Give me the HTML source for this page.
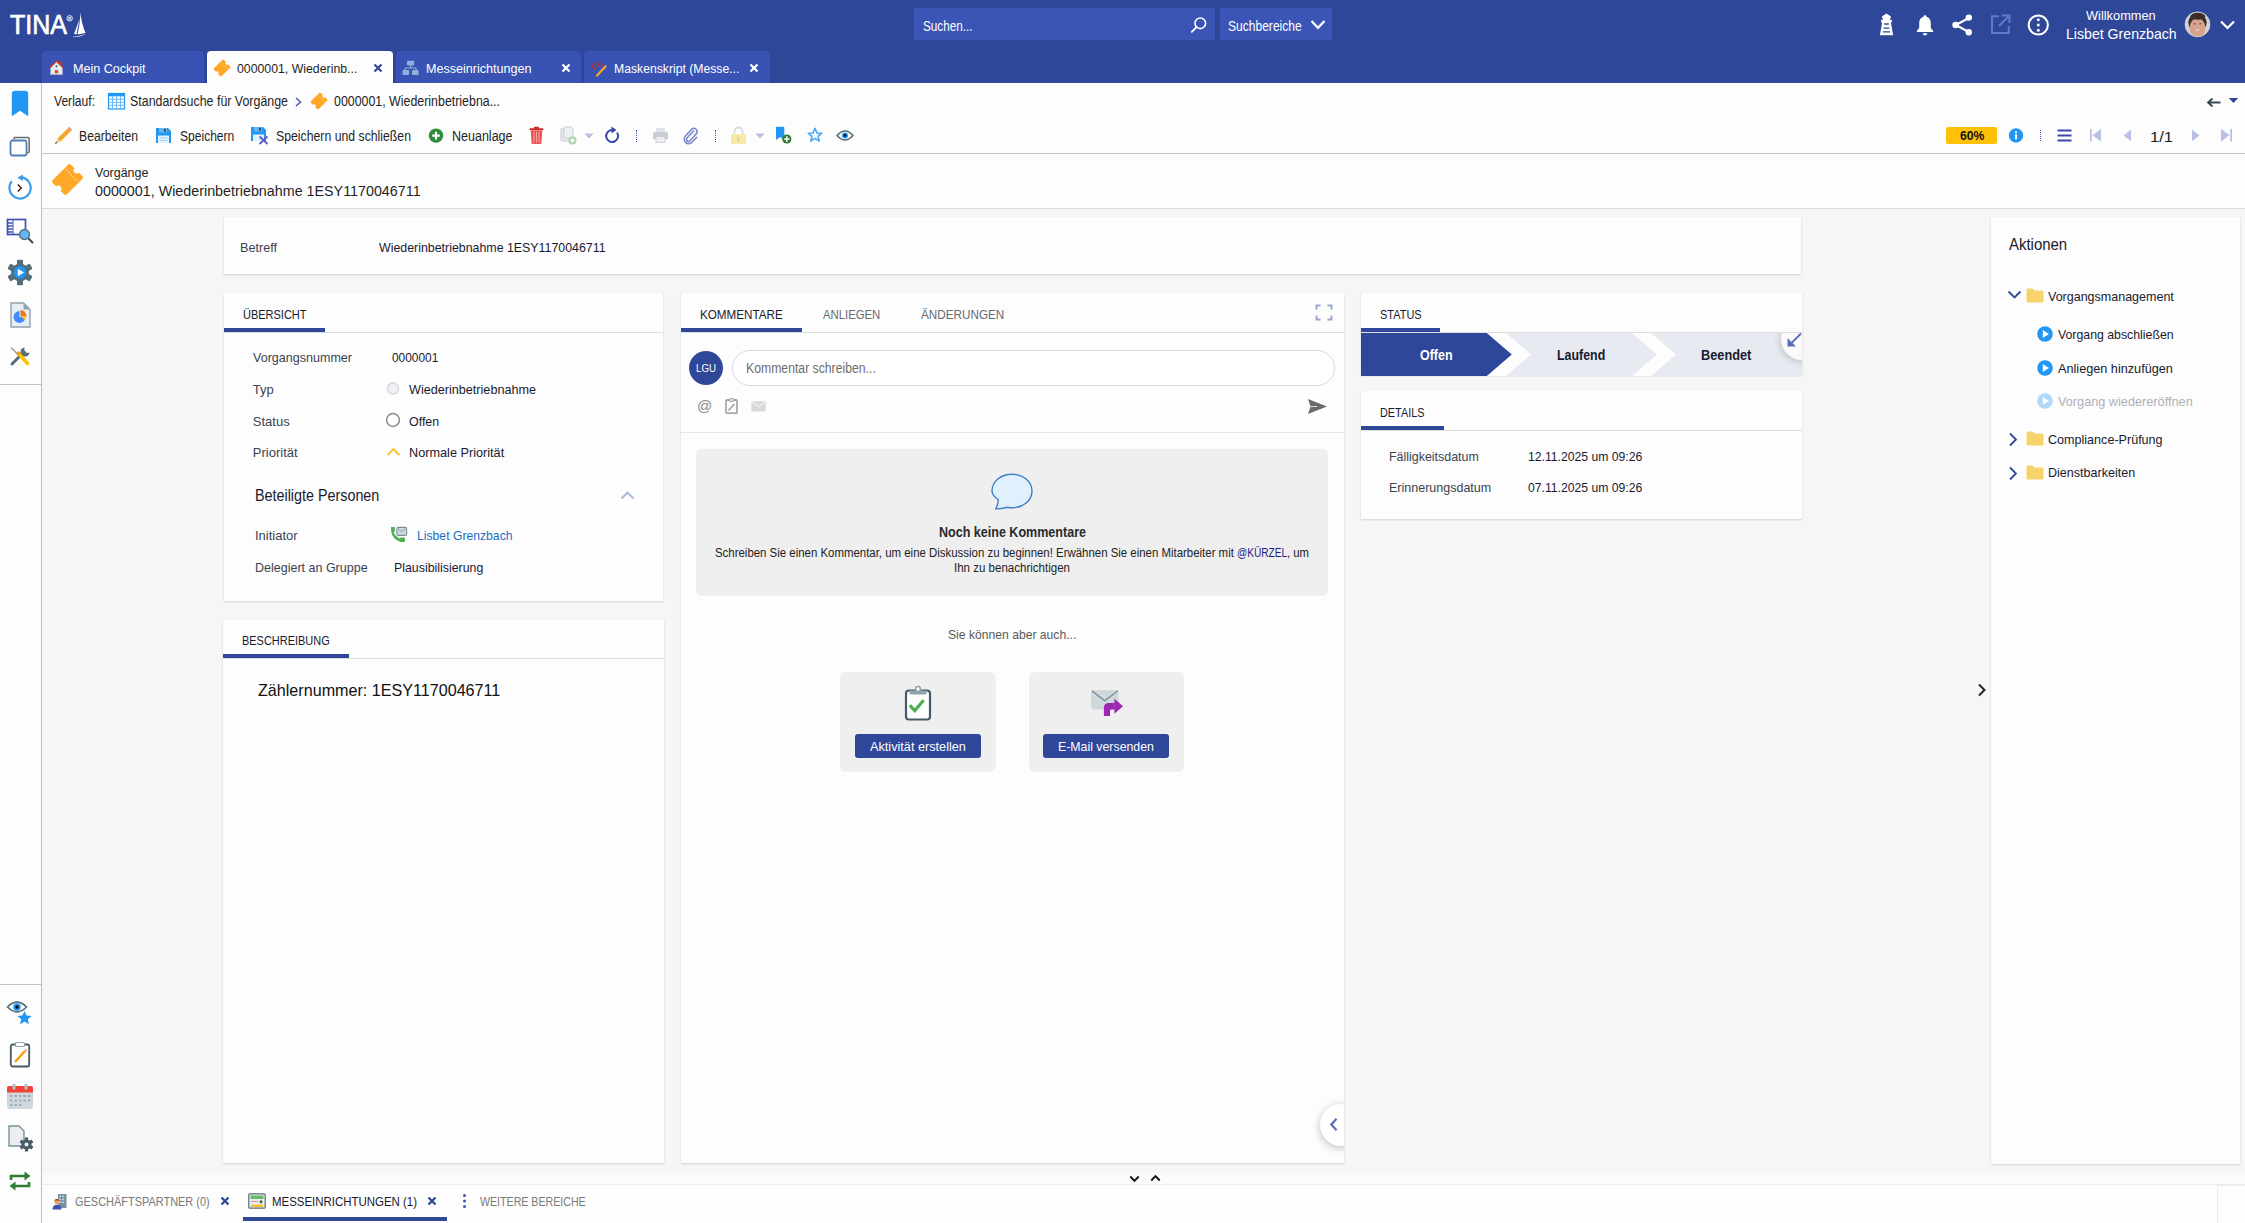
<!DOCTYPE html>
<html><head><meta charset="utf-8">
<style>
*{box-sizing:border-box;margin:0;padding:0}
html,body{width:2245px;height:1223px;overflow:hidden}
body{position:relative;background:#f6f6f6;font-family:"Liberation Sans",sans-serif;color:#1f1f1f;font-size:13px}
.a{position:absolute}
.t{position:absolute;white-space:nowrap;line-height:1;transform-origin:0 0}
svg{position:absolute;overflow:visible}
#hdr{left:0;top:0;width:2245px;height:83px;background:#2e4799}
.tab{position:absolute;top:51px;height:32px;background:#3853b3;border-radius:4px 4px 0 0}
.tab.act{background:#fdfdfd}
.card{position:absolute;background:#fdfdfd;box-shadow:0 1px 2px rgba(0,0,0,0.15)}
.uline{position:absolute;height:4px;background:#2e4799}
.sep{position:absolute;height:1px;background:#dedede}
</style></head><body>
<!-- HEADER -->
<div id="hdr" class="a"></div>

<!-- top tabs -->
<div class="tab" style="left:42px;width:162px"></div>
<div class="tab act" style="left:207px;width:186px"></div>
<div class="tab" style="left:396px;width:185px"></div>
<div class="tab" style="left:584px;width:186px"></div>

<!-- search -->
<div class="a" style="left:914px;top:8px;width:301px;height:32px;background:#3a55b6"></div>
<div class="a" style="left:1220px;top:8px;width:112px;height:32px;background:#3a55b6"></div>

<!-- white areas -->
<div class="a" style="left:0;top:83px;width:41px;height:1140px;background:#fdfdfd"></div>
<div class="a" style="left:41px;top:83px;width:1px;height:1140px;background:#bdbdbd"></div>
<div class="a" style="left:0;top:384px;width:41px;height:1px;background:#c4c4c4"></div>
<div class="a" style="left:0;top:984px;width:41px;height:1px;background:#c4c4c4"></div>
<div class="a" style="left:42px;top:83px;width:2203px;height:70px;background:#fdfdfd"></div>
<div class="a" style="left:42px;top:153px;width:2203px;height:1px;background:#c3c3c3"></div>
<div class="a" style="left:42px;top:154px;width:2203px;height:54px;background:#fdfdfd"></div>
<div class="a" style="left:42px;top:208px;width:2203px;height:1px;background:#dadada"></div>

<!-- bottom bar -->
<div class="a" style="left:42px;top:1173px;width:2203px;height:11px;background:#fbfbfb"></div>
<div class="a" style="left:42px;top:1184px;width:2203px;height:1px;background:#ececec"></div>
<div class="a" style="left:42px;top:1185px;width:2203px;height:38px;background:#fdfdfd"></div>

<!-- cards -->
<div class="card" style="left:224px;top:217px;width:1577px;height:57px"></div>
<div class="card" style="left:224px;top:293px;width:439px;height:308px"></div>
<div class="card" style="left:223px;top:620px;width:441px;height:543px"></div>
<div class="card" style="left:681px;top:293px;width:663px;height:870px"></div>
<div class="card" style="left:1361px;top:293px;width:441px;height:82px"></div>
<div class="card" style="left:1361px;top:391px;width:441px;height:128px"></div>
<div class="card" style="left:1991px;top:217px;width:249px;height:947px"></div>

<!-- ===== HEADER ICONS ===== -->
<!-- sailboat + registered -->
<svg style="left:60px;top:10px" width="30" height="30" viewBox="0 0 30 30">
<circle cx="9.7" cy="8.3" r="2.7" fill="none" stroke="#fff" stroke-width="0.9"/><text x="9.7" y="9.9" font-size="4.2" font-family="Liberation Sans" font-weight="bold" fill="#fff" text-anchor="middle">R</text>
<path d="M20.3 2.5 C21 9 23 17 25.5 23 L17.5 24.5 C19.5 17 20.2 9 20.3 2.5Z" fill="#fff"/>
<path d="M19.5 9 C17.5 15 15.5 20 14 24 L16.5 24.3 C17.5 19 18.7 14 19.5 9Z" fill="#fff"/>
<path d="M13 26.8 C17 26.5 22 25.5 26.7 23.3 C22 26.5 17 27.3 13 27.3Z" fill="#fff"/>
</svg>
<!-- search magnifier -->
<svg style="left:1190px;top:16px" width="18" height="17" viewBox="0 0 18 17">
<circle cx="10.3" cy="7.3" r="5.3" fill="none" stroke="#fff" stroke-width="1.6"/>
<path d="M6.6 11 L1.8 15.8" stroke="#fff" stroke-width="1.8" stroke-linecap="round"/>
</svg>
<!-- Suchbereiche chevron -->
<svg style="left:1310px;top:19px" width="16" height="12" viewBox="0 0 16 12">
<path d="M1.5 2 L8 8.8 L14.5 2" fill="none" stroke="#fff" stroke-width="2.2"/>
</svg>
<!-- lighthouse -->
<svg style="left:1872px;top:8px" width="30" height="32" viewBox="0 0 30 32">
<path d="M14.4 5.6 L19 8.6 L17.8 11.8 H19.8 V14.4 H18.9 L21.1 27.2 H7.9 L10.1 14.4 H9.1 V11.8 H11.1 L9.9 8.6z" fill="#fff"/>
<path d="M12.2 16 H16.8 M11.6 20.1 H17.4 M11 23.9 H18" stroke="#2e4799" stroke-width="1.3"/>
</svg>
<!-- bell -->
<svg style="left:1916px;top:14px" width="18" height="22" viewBox="0 0 18 22">
<path d="M9 1.2 c1 0 1.5 .6 1.5 1.5 c3 .8 4.3 3.3 4.3 6.6 v4.8 l2.4 2.8 v1.2 h-16.4 v-1.2 l2.4 -2.8 v-4.8 c0-3.3 1.3-5.8 4.3-6.6 c0-.9 .5-1.5 1.5-1.5z" fill="#fff"/>
<path d="M6.8 19.2 h4.4 c0 1.3 -1 2.2 -2.2 2.2 s-2.2 -.9 -2.2 -2.2z" fill="#fff"/>
</svg>
<!-- share -->
<svg style="left:1952px;top:14px" width="21" height="22" viewBox="0 0 21 22">
<path d="M16.8 4 L3.8 11 L16.8 18" fill="none" stroke="#fff" stroke-width="2.2"/>
<circle cx="16.8" cy="3.6" r="3.2" fill="#fff"/><circle cx="3.6" cy="11" r="3.3" fill="#fff"/><circle cx="16.8" cy="18.3" r="3.2" fill="#fff"/>
</svg>
<!-- external link dimmed -->
<svg style="left:1990px;top:14px" width="21" height="21" viewBox="0 0 21 21">
<path d="M9 2.2 H2 V19 H18.8 V12" fill="none" stroke="#6478c4" stroke-width="2"/>
<path d="M12 1.5 H19.5 V9 M19.3 1.7 L9 12" fill="none" stroke="#6478c4" stroke-width="2"/>
</svg>
<!-- info dots circle -->
<svg style="left:2027px;top:14px" width="23" height="22" viewBox="0 0 23 22">
<circle cx="11.3" cy="11" r="9.6" fill="none" stroke="#fff" stroke-width="2"/>
<circle cx="11.3" cy="5.8" r="1.5" fill="#fff"/><circle cx="11.3" cy="11" r="1.5" fill="#fff"/><circle cx="11.3" cy="16.2" r="1.5" fill="#fff"/>
</svg>
<!-- avatar -->
<svg style="left:2184px;top:11px" width="27" height="27" viewBox="0 0 27 27">
<defs><clipPath id="avc"><circle cx="13.5" cy="13.4" r="12.6"/></clipPath></defs>
<g clip-path="url(#avc)">
<rect x="0" y="0" width="27" height="27" fill="#d2d3d6"/>
<ellipse cx="13.5" cy="11.5" rx="9.2" ry="8.8" fill="#3b2f2a"/>
<ellipse cx="13.5" cy="17" rx="7.9" ry="10" fill="#d6a48e"/>
<ellipse cx="13.8" cy="5.2" rx="7.4" ry="3.6" fill="#3b2f2a"/>
<ellipse cx="10.7" cy="12.8" rx="1.1" ry="0.7" fill="#6b5a55"/>
<ellipse cx="16.3" cy="12.8" rx="1.1" ry="0.7" fill="#6b5a55"/>
<ellipse cx="13.5" cy="19.2" rx="2.6" ry="1.1" fill="#e3bfb6"/>
</g>
<circle cx="13.5" cy="13.4" r="12.4" fill="none" stroke="#c9cacd" stroke-width="0.8"/>
</svg>
<!-- user chevron -->
<svg style="left:2219px;top:19px" width="17" height="12" viewBox="0 0 17 12">
<path d="M2 2.5 L8.5 9 L15 2.5" fill="none" stroke="#fff" stroke-width="2.2"/>
</svg>

<!-- ===== TAB ICONS ===== -->
<!-- house -->
<svg style="left:49px;top:59px" width="15" height="17" viewBox="0 0 15 17">
<path d="M7.5 2.5 L13.5 8 V15.5 H1.5 V8Z" fill="#e9ecf3"/>
<path d="M0.8 8.6 L7.5 2 L14.2 8.6" fill="none" stroke="#c0392b" stroke-width="1.6"/>
<rect x="11" y="2" width="1.8" height="3.5" fill="#c0392b"/>
<rect x="5.8" y="11" width="3.4" height="4.5" fill="#e4561f"/>
<circle cx="7.5" cy="7.3" r="1" fill="#2d5d8a"/>
<rect x="1.5" y="14.2" width="12" height="1.3" fill="#cfd6e4"/>
</svg>
<!-- ticket (tab) -->
<svg style="left:0;top:0;width:0;height:0"><defs><symbol id="tkt" viewBox="0 0 32 32"><g transform="translate(16,16) rotate(-45)"><path d="M-12.5 -7.8 Q-12.5 -9.8 -10.5 -9.8 H10.5 Q12.5 -9.8 12.5 -7.8 V-2.9 A2.9 2.9 0 0 0 12.5 2.9 V7.8 Q12.5 9.8 10.5 9.8 H-10.5 Q-12.5 9.8 -12.5 7.8 V2.9 A2.9 2.9 0 0 0 -12.5 -2.9Z" fill="#ffa726"/><path d="M5.8 -8 V8.5" stroke="#ffe3b8" stroke-width="1.4" stroke-dasharray="1.5 1.7"/></g></symbol></defs></svg>
<svg style="left:213px;top:59px" width="18" height="18" viewBox="0 0 32 32"><use href="#tkt"/></svg>
<!-- × dark -->
<svg style="left:373px;top:63px" width="10" height="10" viewBox="0 0 10 10"><path d="M1.5 1.5 L8.5 8.5 M8.5 1.5 L1.5 8.5" stroke="#2e4799" stroke-width="2.2"/></svg>
<!-- network icon -->
<svg style="left:402px;top:60px" width="17" height="16" viewBox="0 0 17 16">
<rect x="5" y="0.8" width="7.2" height="4.6" rx="0.8" fill="#8fb0dc"/>
<path d="M8.6 5.4 V8 M3 8 H14 M3 8 V10 M14 8 V10" stroke="#8fb0dc" stroke-width="1.2" fill="none"/>
<rect x="0.5" y="10" width="6.6" height="5" rx="0.8" fill="#8fb0dc"/>
<rect x="10" y="10" width="6.6" height="5" rx="0.8" fill="#8fb0dc"/>
</svg>
<!-- × white -->
<svg style="left:561px;top:63px" width="10" height="10" viewBox="0 0 10 10"><path d="M1.5 1.5 L8.5 8.5 M8.5 1.5 L1.5 8.5" stroke="#fff" stroke-width="2.2"/></svg>
<!-- code pencil -->
<svg style="left:591px;top:61px" width="17" height="16" viewBox="0 0 17 16">
<path d="M4 2.5 L1 5.3 L4 8" fill="none" stroke="#c62828" stroke-width="1.3"/>
<path d="M7.8 1 L6 8" stroke="#c62828" stroke-width="1.3"/>
<path d="M10 2.5 L12.5 5 " fill="none" stroke="#c62828" stroke-width="1.3"/>
<path d="M14.5 5.5 L6 14.5" stroke="#ffa726" stroke-width="2.2" stroke-linecap="round"/>
</svg>
<svg style="left:749px;top:63px" width="10" height="10" viewBox="0 0 10 10"><path d="M1.5 1.5 L8.5 8.5 M8.5 1.5 L1.5 8.5" stroke="#fff" stroke-width="2.2"/></svg>
<!-- ===== BREADCRUMB ===== -->
<svg style="left:107px;top:92px" width="19" height="18" viewBox="0 0 19 18">
<rect x="1.5" y="1.5" width="16" height="15.5" fill="#fff" stroke="#2196f3" stroke-width="1.2"/>
<rect x="1.5" y="1.5" width="16" height="2.8" fill="#2196f3"/>
<path d="M1.5 7.3 H17.5 M1.5 10.3 H17.5 M1.5 13.3 H17.5 M5.5 4 V17 M9.5 4 V17 M13.5 4 V17" stroke="#6cb8f7" stroke-width="1"/>
</svg>
<svg style="left:294px;top:97px" width="9" height="10" viewBox="0 0 9 10"><path d="M2 1 L6.5 5 L2 9" fill="none" stroke="#4a5aa8" stroke-width="1.5"/></svg>
<svg style="left:310px;top:92px" width="18" height="18" viewBox="0 0 32 32"><use href="#tkt"/></svg>
<!-- back arrow + dropdown -->
<svg style="left:2206px;top:96px" width="16" height="12" viewBox="0 0 16 12"><path d="M14.5 6.5 H3 M6.5 2.5 L2 6.5 L6.5 10.5" fill="none" stroke="#37474f" stroke-width="1.8"/></svg>
<svg style="left:2228px;top:97px" width="11" height="7" viewBox="0 0 11 7"><path d="M0.8 1 H10.2 L5.5 6z" fill="#2e4799"/></svg>

<!-- ===== TOOLBAR ===== -->
<!-- pencil -->
<svg style="left:54px;top:126px" width="19" height="19" viewBox="0 0 19 19">
<path d="M3.5 12.5 L13.8 2.2 L16.8 5.2 L6.5 15.5z" fill="#f9a825"/>
<path d="M13.8 2.2 L15.2 0.8 L18.2 3.8 L16.8 5.2z" fill="#ef8f8f"/>
<path d="M3.5 12.5 L6.5 15.5 L1 18z" fill="#f3c78a"/>
<path d="M1 18 L2 15.8 L3.2 17z" fill="#37474f"/>
</svg>
<!-- floppy -->
<svg style="left:155px;top:127px" width="17" height="17" viewBox="0 0 17 17">
<path d="M1 1 H13 L16 4 V16 H1z" fill="#2196f3"/>
<rect x="4" y="1" width="8" height="4.5" fill="#64b5f6"/>
<rect x="9" y="1.8" width="1.8" height="3" fill="#37474f"/>
<rect x="3" y="8.5" width="11" height="7.5" fill="#e3f2fd"/>
<path d="M4.5 11 H12.5 M4.5 13.5 H12.5" stroke="#90caf9" stroke-width="0.8"/>
</svg>
<!-- floppy x -->
<svg style="left:250px;top:126px" width="19" height="19" viewBox="0 0 19 19">
<path d="M1 1 H13 L16 4 V15 H1z" fill="#2196f3"/>
<rect x="4" y="1" width="8" height="4.5" fill="#64b5f6"/>
<rect x="9" y="1.8" width="1.8" height="3" fill="#37474f"/>
<rect x="3" y="8.5" width="11" height="6.5" fill="#e3f2fd"/>
<path d="M9.5 10.5 L17.5 18 M17.5 10.5 L9.5 18" stroke="#5c5fc8" stroke-width="1.8"/>
</svg>
<!-- plus circle -->
<svg style="left:428px;top:128px" width="16" height="16" viewBox="0 0 16 16">
<circle cx="8" cy="7.6" r="7.2" fill="#2e8b3a"/>
<path d="M8 3.8 V11.4 M4.2 7.6 H11.8" stroke="#fff" stroke-width="2.2"/>
</svg>
<!-- trash -->
<svg style="left:529px;top:126px" width="15" height="19" viewBox="0 0 15 19">
<rect x="0.6" y="2.2" width="13.8" height="2" rx="0.8" fill="#c62828"/>
<rect x="5" y="0.8" width="5" height="2" rx="0.8" fill="#c62828"/>
<path d="M1.8 4.5 H13.2 L12.4 17.2 Q12.3 18 11.5 18 H3.5 Q2.7 18 2.6 17.2z" fill="#ef5350"/>
<path d="M5 6 V16.5 M7.5 6 V16.5 M10 6 V16.5" stroke="#f8a5a5" stroke-width="1"/>
</svg>
<!-- copy add dimmed -->
<svg style="left:560px;top:126px" width="17" height="19" viewBox="0 0 17 19">
<path d="M1 3 H8 L10 5 V15 H1z" fill="#e5e8ec" stroke="#c8ced6" stroke-width="1"/>
<path d="M4 1 H11 L13 3 V12 H4z" fill="#eef0f3" stroke="#c8ced6" stroke-width="1"/>
<circle cx="12.5" cy="14.5" r="4" fill="#a5d6a7"/>
<path d="M12.5 12 V17 M10 14.5 H15" stroke="#fff" stroke-width="1.4"/>
</svg>
<svg style="left:584px;top:133px" width="10" height="6" viewBox="0 0 10 6"><path d="M0.5 0.5 H9.5 L5 5.5z" fill="#b9bfe0"/></svg>
<!-- refresh -->
<svg style="left:604px;top:126px" width="16" height="18" viewBox="0 0 16 18">
<path d="M13 6.5 A6 6 0 1 1 8 4" fill="none" stroke="#3949ab" stroke-width="2"/>
<path d="M7.5 0.5 L12.5 4 L7.5 7.5z" fill="#3949ab"/>
</svg>
<!-- separators -->
<div class="a" style="left:636px;top:130px;width:1px;height:12px;border-left:1px dotted #3f51b5"></div>
<div class="a" style="left:715px;top:130px;width:1px;height:12px;border-left:1px dotted #3f51b5"></div>
<!-- printer dim -->
<svg style="left:652px;top:127px" width="17" height="17" viewBox="0 0 17 17">
<rect x="4" y="1" width="9" height="4" fill="#dfe2e6"/>
<rect x="1" y="5" width="15" height="7.5" rx="1.5" fill="#c9ced4"/>
<rect x="4" y="9.5" width="9" height="6" fill="#eceef1" stroke="#c9ced4" stroke-width="0.8"/>
</svg>
<!-- paperclip -->
<svg style="left:683px;top:127px" width="16" height="17" viewBox="0 0 16 17">
<path d="M11 3.5 L4 11 A2 2 0 0 0 7 13.8 L13.5 6.5 A3.3 3.3 0 0 0 8.8 2 L2.5 9 A4.5 4.5 0 0 0 9 15.3 L14 10" fill="none" stroke="#7986cb" stroke-width="1.6"/>
</svg>
<!-- lock dim -->
<svg style="left:730px;top:126px" width="17" height="19" viewBox="0 0 17 19">
<path d="M4.5 8 V5.5 A4 4 0 0 1 12.5 5.5 V8" fill="none" stroke="#d7dadf" stroke-width="1.8"/>
<rect x="1" y="8" width="15" height="10" rx="1" fill="#f7e9a6"/>
<rect x="7.6" y="11" width="1.8" height="4.5" fill="#d9cfa0"/>
</svg>
<svg style="left:755px;top:133px" width="10" height="6" viewBox="0 0 10 6"><path d="M0.5 0.5 H9.5 L5 5.5z" fill="#b9bfe0"/></svg>
<!-- bookmark plus -->
<svg style="left:775px;top:126px" width="17" height="19" viewBox="0 0 17 19">
<path d="M1 1.5 Q1 0.8 1.8 0.8 H8.5 Q9.3 0.8 9.3 1.5 V14 L5.2 11 L1 14z" fill="#2196f3"/>
<circle cx="11.8" cy="13" r="4.6" fill="#2e7d32"/>
<path d="M11.8 10.3 V15.7 M9.1 13 H14.5" stroke="#fff" stroke-width="1.6"/>
</svg>
<!-- star outline -->
<svg style="left:807px;top:127px" width="16" height="16" viewBox="0 0 16 16">
<path d="M8 1.3 L9.9 5.9 L14.8 6.2 L11 9.3 L12.3 14.1 L8 11.4 L3.7 14.1 L5 9.3 L1.2 6.2 L6.1 5.9z" fill="none" stroke="#42a5f5" stroke-width="1.5" stroke-linejoin="round"/>
</svg>
<!-- eye -->
<svg style="left:836px;top:129px" width="18" height="13" viewBox="0 0 18 13">
<path d="M1 6.5 Q9 -2.5 17 6.5 Q9 15.5 1 6.5z" fill="#fff" stroke="#546e7a" stroke-width="1.5"/>
<circle cx="9" cy="6.5" r="3" fill="#2196f3"/><circle cx="9" cy="6.5" r="1.4" fill="#111"/>
</svg>

<!-- right toolbar -->
<div class="a" style="left:1946px;top:127px;width:51px;height:17px;background:#ffc107;border-radius:2px"></div>
<svg style="left:2008px;top:128px" width="16" height="16" viewBox="0 0 16 16">
<circle cx="8" cy="7.5" r="7.2" fill="#2196f3"/>
<rect x="7" y="6.3" width="2" height="5" fill="#fff"/><circle cx="8" cy="4.3" r="1.1" fill="#fff"/>
</svg>
<div class="a" style="left:2040px;top:130px;width:1px;height:11px;border-left:1px dotted #3f51b5"></div>
<svg style="left:2057px;top:129px" width="15" height="13" viewBox="0 0 15 13"><path d="M0.5 1.5 H14.5 M0.5 6.5 H14.5 M0.5 11.5 H14.5" stroke="#3949ab" stroke-width="1.8"/></svg>
<svg style="left:2089px;top:128px" width="13" height="14" viewBox="0 0 13 14"><rect x="1" y="1" width="1.8" height="12.5" fill="#b8c0e6"/><path d="M12 1 V13.5 L3.5 7.2z" fill="#b8c0e6"/></svg>
<svg style="left:2122px;top:129px" width="10" height="13" viewBox="0 0 10 13"><path d="M9 0.8 V12.2 L1.5 6.5z" fill="#b8c0e6"/></svg>
<svg style="left:2191px;top:129px" width="10" height="13" viewBox="0 0 10 13"><path d="M1 0.8 V12.2 L8.5 6.5z" fill="#b8c0e6"/></svg>
<svg style="left:2220px;top:128px" width="13" height="14" viewBox="0 0 13 14"><rect x="10.2" y="1" width="1.8" height="12.5" fill="#b8c0e6"/><path d="M1 1 V13.5 L9.5 7.2z" fill="#b8c0e6"/></svg>

<!-- title ticket -->
<svg style="left:51px;top:163px" width="33" height="33" viewBox="0 0 32 32"><use href="#tkt"/></svg>
<!-- ===== SIDEBAR ===== -->
<svg style="left:11px;top:90px" width="18" height="27" viewBox="0 0 18 27">
<path d="M0.8 4 Q0.8 0.8 4 0.8 H14 Q17.2 0.8 17.2 4 V26.3 L9 20.8 L0.8 26.3z" fill="#2196f3"/>
</svg>
<svg style="left:9px;top:136px" width="22" height="21" viewBox="0 0 22 21">
<path d="M5 3.5 V2.5 Q5 1.5 6 1.5 H19 Q20.2 1.5 20.2 2.7 V15.5 Q20.2 16.5 19.2 16.5 H18" fill="none" stroke="#6b6b6b" stroke-width="1.5"/>
<rect x="1.5" y="4.5" width="16" height="15" rx="2" fill="#fff" stroke="#4f7fb5" stroke-width="1.8"/>
</svg>
<svg style="left:7px;top:175px" width="26" height="26" viewBox="0 0 26 26">
<path d="M14.5 2.4 A10.6 10.6 0 1 1 4.8 6.3" fill="none" stroke="#3d9be9" stroke-width="2.2"/>
<path d="M15.8 -0.4 L10.2 2.8 L15.8 6z" fill="#3d9be9"/>
<path d="M10.8 9.5 L14.3 13 L10.8 16.5" fill="none" stroke="#3b1a1a" stroke-width="1.4"/>
</svg>
<svg style="left:6px;top:218px" width="28" height="26" viewBox="0 0 28 26">
<rect x="1.5" y="1.5" width="18" height="15" fill="#fff" stroke="#3f51b5" stroke-width="1.7"/>
<path d="M2 5 H6.5 M2 8 H6.5 M2 11 H6.5 M2 14 H6.5" stroke="#3f51b5" stroke-width="1.6"/>
<path d="M7 1.5 V16.5" stroke="#3f51b5" stroke-width="1"/>
<path d="M22 20 L26.5 24.5" stroke="#37474f" stroke-width="2" stroke-linecap="round"/>
<circle cx="18.5" cy="16.5" r="5" fill="#64b5f6" stroke="#546e7a" stroke-width="1.3"/>
</svg>
<svg style="left:7px;top:259px" width="26" height="27" viewBox="0 0 26 27">
<g fill="#546e7a" transform="translate(13,13.5)">
<circle r="9"/>
<rect x="-3" y="-12.8" width="6" height="6" rx="1"/>
<rect x="-3" y="-12.8" width="6" height="6" rx="1" transform="rotate(60)"/>
<rect x="-3" y="-12.8" width="6" height="6" rx="1" transform="rotate(120)"/>
<rect x="-3" y="-12.8" width="6" height="6" rx="1" transform="rotate(180)"/>
<rect x="-3" y="-12.8" width="6" height="6" rx="1" transform="rotate(240)"/>
<rect x="-3" y="-12.8" width="6" height="6" rx="1" transform="rotate(300)"/>
</g>
<circle cx="13" cy="13.5" r="6.2" fill="#2196f3"/>
<path d="M10.8 9.8 L17 13.5 L10.8 17.2z" fill="#fff"/>
</svg>
<svg style="left:10px;top:302px" width="21" height="26" viewBox="0 0 21 26">
<path d="M1 1 H13.5 L20 7.5 V25 H1z" fill="#e8eef7" stroke="#90a4ae" stroke-width="1.4"/>
<path d="M13.5 1 V7.5 H20z" fill="#90a4ae"/>
<path d="M9.5 15 V9 A6 6 0 1 0 15.5 15z" fill="#448aff"/>
<path d="M10.5 14 V8 A6 6 0 0 1 16.5 14z" fill="#e67e22"/>
<path d="M10.5 14 H16.5 A6 6 0 0 1 14.8 18.2z" fill="#f4c430"/>
</svg>
<svg style="left:9px;top:346px" width="22" height="21" viewBox="0 0 22 21">
<path d="M2.5 2 L10 9.5" stroke="#90a4ae" stroke-width="1.6" stroke-linecap="round"/>
<path d="M3 18 L13.5 7.5" stroke="#546e7a" stroke-width="3" stroke-linecap="round"/>
<path d="M15.5 1.5 A4.5 4.5 0 1 0 20.5 6.5 L18 7 L15.3 4.2z" fill="#546e7a"/>
<path d="M9.5 7.5 L18.5 17.5" stroke="#ffc107" stroke-width="3.6" stroke-linecap="round"/>
<path d="M8.6 6.6 L10.6 8.6" stroke="#ff9800" stroke-width="3.6"/>
</svg>

<!-- bottom sidebar icons -->
<svg style="left:6px;top:999px" width="28" height="28" viewBox="0 0 28 28">
<path d="M1.5 8 Q11 -1.5 20.5 8 Q11 17.5 1.5 8z" fill="#fff" stroke="#546e7a" stroke-width="1.7"/>
<circle cx="11" cy="8" r="3.8" fill="#2196f3"/><circle cx="11" cy="8" r="1.7" fill="#000"/>
<path d="M18.5 12 L20.6 16.6 L25.6 17 L21.8 20.3 L23 25.2 L18.5 22.5 L14 25.2 L15.2 20.3 L11.4 17 L16.4 16.6z" fill="#2196f3"/>
</svg>
<svg style="left:9px;top:1041px" width="22" height="27" viewBox="0 0 22 27">
<rect x="1.8" y="3.5" width="18.4" height="22" rx="2" fill="#fff" stroke="#455a64" stroke-width="1.8"/>
<rect x="6.5" y="1.5" width="9" height="4" rx="1" fill="#fff" stroke="#90a4ae" stroke-width="1.2"/>
<path d="M6 21 L16 10" stroke="#ff9800" stroke-width="2.2"/>
<path d="M16 10 L17.5 8.5" stroke="#ef9a9a" stroke-width="2.2"/>
</svg>
<svg style="left:6px;top:1083px" width="28" height="27" viewBox="0 0 28 27">
<rect x="1" y="3" width="26" height="23" rx="2" fill="#cfd8dc"/>
<path d="M1 5 Q1 3 3 3 H25 Q27 3 27 5 V9.5 H1z" fill="#f44336"/>
<rect x="6.5" y="0.8" width="3" height="6" rx="1.2" fill="#b0bec5"/><rect x="18.5" y="0.8" width="3" height="6" rx="1.2" fill="#b0bec5"/>
<g fill="#9eadb5"><rect x="4" y="12" width="2.5" height="2"/><rect x="8.5" y="12" width="2.5" height="2"/><rect x="13" y="12" width="2.5" height="2"/><rect x="17.5" y="12" width="2.5" height="2"/><rect x="22" y="12" width="2.5" height="2"/>
<rect x="4" y="16.5" width="2.5" height="2"/><rect x="8.5" y="16.5" width="2.5" height="2"/><rect x="13" y="16.5" width="2.5" height="2"/><rect x="17.5" y="16.5" width="2.5" height="2"/><rect x="22" y="16.5" width="2.5" height="2"/>
<rect x="4" y="21" width="2.5" height="2"/><rect x="8.5" y="21" width="2.5" height="2"/><rect x="13" y="21" width="2.5" height="2"/></g>
</svg>
<svg style="left:7px;top:1125px" width="27" height="27" viewBox="0 0 27 27">
<path d="M2 1 H12 L17 6 V21 H2z" fill="#eceff1" stroke="#78909c" stroke-width="1.4"/>
<g transform="translate(19.5,19.5)" fill="#455a64"><circle r="5"/>
<rect x="-1.6" y="-7" width="3.2" height="3.5"/><rect x="-1.6" y="-7" width="3.2" height="3.5" transform="rotate(60)"/><rect x="-1.6" y="-7" width="3.2" height="3.5" transform="rotate(120)"/><rect x="-1.6" y="-7" width="3.2" height="3.5" transform="rotate(180)"/><rect x="-1.6" y="-7" width="3.2" height="3.5" transform="rotate(240)"/><rect x="-1.6" y="-7" width="3.2" height="3.5" transform="rotate(300)"/>
<circle r="2" fill="#eceff1"/></g>
</svg>
<svg style="left:8px;top:1169px" width="24" height="24" viewBox="0 0 24 24">
<path d="M3 11 V7 H18" fill="none" stroke="#2e7d32" stroke-width="2.6"/>
<path d="M16.5 2.5 L22.5 7 L16.5 11.5z" fill="#2e7d32"/>
<path d="M21 13 V17 H6" fill="none" stroke="#2e7d32" stroke-width="2.6"/>
<path d="M7.5 12.5 L1.5 17 L7.5 21.5z" fill="#2e7d32"/>
</svg>
<!-- ===== CARDS CONTENT ===== -->
<!-- Übersicht tab underline & sep -->
<div class="uline" style="left:224px;top:328px;width:101px;height:4px"></div>
<div class="sep" style="left:224px;top:332px;width:439px"></div>
<!-- radios -->
<svg style="left:386px;top:382px" width="14" height="14" viewBox="0 0 14 14"><circle cx="7" cy="6.5" r="5.6" fill="#eef0f8" stroke="#cfcfcf" stroke-width="1.1"/></svg>
<svg style="left:385px;top:412px" width="16" height="16" viewBox="0 0 16 16"><circle cx="8" cy="8" r="6.4" fill="#fff" stroke="#8a8a8a" stroke-width="1.5"/></svg>
<svg style="left:386px;top:447px" width="15" height="10" viewBox="0 0 15 10"><path d="M1.5 8 L7.4 2 L13.3 8" fill="none" stroke="#fbc02d" stroke-width="1.8"/></svg>
<!-- chevron up light -->
<svg style="left:620px;top:490px" width="15" height="11" viewBox="0 0 15 11"><path d="M1.5 8.5 L7.5 2.5 L13.5 8.5" fill="none" stroke="#a9b4d9" stroke-width="1.8"/></svg>
<!-- phone mail icon -->
<svg style="left:390px;top:526px" width="18" height="17" viewBox="0 0 18 17">
<rect x="6.9" y="1.4" width="9.7" height="8" rx="1.2" fill="#cfd8dc" stroke="#78909c" stroke-width="1.1"/>
<path d="M8 2.8 L11.75 5.6 L15.5 2.8" fill="none" stroke="#8a9ba5" stroke-width="0.9"/>
<path d="M1.1 1 H4.8 V5.3 L3.6 7 Q5.5 10.3 9.6 12.4 L11 11.4 H14.9 V16 H10.8 Q2.2 13.2 1.1 5z" fill="#4caf50"/>
</svg>
<!-- Beschreibung underline & sep -->
<div class="uline" style="left:223px;top:654px;width:126px;height:4px"></div>
<div class="sep" style="left:223px;top:658px;width:441px"></div>

<!-- Kommentare tabs -->
<div class="uline" style="left:681px;top:328px;width:121px;height:4px"></div>
<div class="sep" style="left:681px;top:332px;width:663px"></div>
<!-- expand icon -->
<svg style="left:1315px;top:304px" width="18" height="17" viewBox="0 0 18 17">
<path d="M1.5 5.5 V1.5 H5.5 M12.5 1.5 H16.5 V5.5 M16.5 11.5 V15.5 H12.5 M5.5 15.5 H1.5 V11.5" fill="none" stroke="#9aa6d3" stroke-width="2"/>
</svg>
<!-- LGU avatar -->
<div class="a" style="left:689px;top:351px;width:34px;height:34px;border-radius:50%;background:#2e4799"></div>
<!-- input -->
<div class="a" style="left:732px;top:350px;width:603px;height:36px;border-radius:18px;background:#fff;border:1px solid #d6d9e1"></div>
<!-- @ -->
<div class="t" style="left:697px;top:398px;font-size:15px;color:#8a8a8a">@</div>
<!-- clipboard pencil gray -->
<svg style="left:725px;top:398px" width="13" height="16" viewBox="0 0 13 16">
<rect x="1" y="2" width="11" height="13.2" rx="0.8" fill="none" stroke="#8a8a8a" stroke-width="1.3"/>
<rect x="4" y="0.8" width="5" height="2.4" rx="0.8" fill="#fff" stroke="#8a8a8a" stroke-width="1"/>
<path d="M3.5 12.5 L9.5 6" stroke="#9a9a9a" stroke-width="1.4"/>
</svg>
<!-- mail gray -->
<svg style="left:751px;top:401px" width="15" height="11" viewBox="0 0 15 11">
<rect x="0.3" y="0.3" width="14.4" height="10.2" rx="1" fill="#d9d9d9"/>
<path d="M0.8 1 L7.5 5.8 L14.2 1" fill="none" stroke="#fafafa" stroke-width="1"/>
</svg>
<!-- send -->
<svg style="left:1307px;top:398px" width="21" height="17" viewBox="0 0 21 17">
<path d="M1 1 L20 8.5 L1 16 L3.5 8.5z" fill="#6b6b6b"/>
<path d="M3.5 8.5 H10" stroke="#fdfdfd" stroke-width="0.8"/>
</svg>
<div class="sep" style="left:681px;top:432px;width:663px;background:#e6e6e6"></div>
<!-- gray box -->
<div class="a" style="left:696px;top:449px;width:632px;height:147px;border-radius:6px;background:#efefef"></div>
<!-- bubble -->
<svg style="left:990px;top:472px" width="44" height="39" viewBox="0 0 44 39">
<path d="M8.3 27.5 C3.5 24.3 2 20.5 2 19 C2 9.5 10.8 2.2 22 2.2 C33.2 2.2 42 9.5 42 19 C42 28.5 33.2 35.8 22 35.8 C20.5 35.8 19 35.6 17.5 35.2 C14.5 36 10 37 5.8 36.8 C7.3 34.5 8.3 31 8.3 27.5z" fill="#e0f0fd" stroke="#3d7fc9" stroke-width="1.4"/>
</svg>
<!-- action cards -->
<div class="a" style="left:840px;top:672px;width:156px;height:100px;border-radius:6px;background:#efefef"></div>
<div class="a" style="left:1029px;top:672px;width:155px;height:100px;border-radius:6px;background:#efefef"></div>
<svg style="left:904px;top:685px" width="28" height="36" viewBox="0 0 28 36">
<rect x="2" y="5.5" width="24" height="29" rx="3" fill="#fff" stroke="#455a64" stroke-width="2.2"/>
<path d="M5.5 5.5 H22.5 V8 Q22.5 9.5 21 9.5 H7 Q5.5 9.5 5.5 8z" fill="#90a4ae"/>
<circle cx="14" cy="4" r="2.4" fill="#fff" stroke="#90a4ae" stroke-width="1.5"/>
<path d="M5.8 20.3 L10.8 25.6 L19.6 15.3" fill="none" stroke="#4caf50" stroke-width="3.2"/>
</svg>
<svg style="left:1090px;top:689px" width="35" height="30" viewBox="0 0 35 30">
<rect x="1" y="0.9" width="27.6" height="19.5" rx="3" fill="#cfd8dc"/>
<path d="M1.8 1.8 L14.8 11.8 L27.8 1.8" fill="none" stroke="#78909c" stroke-width="1.4"/>
<path d="M13.9 26.9 V18.5 A4.5 4.5 0 0 1 18.4 14 H24.6 V20.4 H21.3 Q20 20.4 20 21.7 V26.9z" fill="#9c27b0"/>
<path d="M24.4 9.8 L33 17.2 L24.4 24.8z" fill="#9c27b0"/>
</svg>
<div class="a" style="left:855px;top:734px;width:126px;height:24px;border-radius:3px;background:#2e4799"></div>
<div class="a" style="left:1043px;top:734px;width:126px;height:24px;border-radius:3px;background:#2e4799"></div>
<!-- collapse circle bottom -->
<div class="a" style="left:1320px;top:1104px;width:42px;height:42px;border-radius:50%;background:#fff;box-shadow:0 2px 8px rgba(0,0,0,0.25);clip-path:inset(-20px 18px -20px -20px)"></div>
<svg style="left:1328px;top:1117px" width="12" height="15" viewBox="0 0 12 15"><path d="M8.5 1.8 L3.3 7.5 L8.5 13.2" fill="none" stroke="#5b6eb5" stroke-width="2.2"/></svg>

<!-- STATUS -->
<div class="uline" style="left:1361px;top:328px;width:79px;height:4px"></div>
<div class="sep" style="left:1361px;top:332px;width:441px"></div>
<svg style="left:1361px;top:333px" width="441" height="43" viewBox="0 0 441 43">
<rect x="0" y="0" width="441" height="43" fill="#e8eaf2"/>
<path d="M0 0 H126 L151 21.5 L126 43 H0z" fill="#2e4799"/>
<path d="M126 0 H145 L170 21.5 L145 43 H126 L151 21.5z" fill="#fdfdfd"/>
<path d="M271 0 H290 L315 21.5 L290 43 H271 L296 21.5z" fill="#fdfdfd"/>
</svg>
<!-- collapse diag button -->
<div class="a" style="left:1781px;top:318px;width:42px;height:42px;border-radius:50%;background:#fafafb;box-shadow:-2px 2px 6px rgba(0,0,0,0.15);clip-path:inset(15px 21px -20px -20px)"></div>
<svg style="left:1786px;top:333px" width="16" height="15" viewBox="0 0 16 15"><path d="M15 0.5 L4 11.5" stroke="#5b6eb5" stroke-width="1.8"/><path d="M1.5 5 V13.5 H10z" fill="#5b6eb5"/></svg>
<!-- DETAILS -->
<div class="uline" style="left:1361px;top:426px;width:83px;height:4px"></div>
<div class="sep" style="left:1361px;top:430px;width:441px"></div>

<!-- AKTIONEN -->
<svg style="left:2007px;top:290px" width="15" height="10" viewBox="0 0 15 10"><path d="M1.5 1.5 L7.5 7.5 L13.5 1.5" fill="none" stroke="#2e4799" stroke-width="1.8"/></svg>
<svg style="left:0;top:0;width:0;height:0"><defs><symbol id="fld" viewBox="0 0 18 15"><path d="M0.5 2 Q0.5 0.5 2 0.5 H6.5 L8.5 2.5 H16 Q17.5 2.5 17.5 4 V13 Q17.5 14.5 16 14.5 H2 Q0.5 14.5 0.5 13z" fill="#f6d36b"/></symbol>
<symbol id="ply" viewBox="0 0 16 16"><circle cx="8" cy="8" r="7.8" fill="#2196f3"/><path d="M5.8 4 L12 8 L5.8 12z" fill="#fff"/></symbol></defs></svg>
<svg style="left:2026px;top:288px" width="18" height="15" viewBox="0 0 18 15"><use href="#fld"/></svg>
<svg style="left:2037px;top:326px" width="16" height="16" viewBox="0 0 16 16"><use href="#ply"/></svg>
<svg style="left:2037px;top:360px" width="16" height="16" viewBox="0 0 16 16"><use href="#ply"/></svg>
<svg style="left:2037px;top:393px;opacity:0.35" width="16" height="16" viewBox="0 0 16 16"><use href="#ply"/></svg>
<svg style="left:2008px;top:432px" width="11" height="15" viewBox="0 0 11 15"><path d="M2 1.5 L8 7.5 L2 13.5" fill="none" stroke="#2e4799" stroke-width="1.8"/></svg>
<svg style="left:2026px;top:431px" width="18" height="15" viewBox="0 0 18 15"><use href="#fld"/></svg>
<svg style="left:2008px;top:466px" width="11" height="15" viewBox="0 0 11 15"><path d="M2 1.5 L8 7.5 L2 13.5" fill="none" stroke="#2e4799" stroke-width="1.8"/></svg>
<svg style="left:2026px;top:465px" width="18" height="15" viewBox="0 0 18 15"><use href="#fld"/></svg>
<!-- right > chevron -->
<svg style="left:1977px;top:683px" width="10" height="14" viewBox="0 0 10 14"><path d="M2 1.5 L7.5 7 L2 12.5" fill="none" stroke="#222" stroke-width="2"/></svg>

<!-- BOTTOM BAR -->
<svg style="left:1129px;top:1175px" width="12" height="8" viewBox="0 0 12 8"><path d="M1.3 1.5 L5.5 5.8 L9.7 1.5" fill="none" stroke="#111" stroke-width="1.9"/></svg>
<svg style="left:1150px;top:1174px" width="12" height="8" viewBox="0 0 12 8"><path d="M1.3 6.5 L5.5 2.2 L9.7 6.5" fill="none" stroke="#111" stroke-width="1.9"/></svg>
<!-- geschäftspartner icon -->
<svg style="left:52px;top:1193px" width="15" height="17" viewBox="0 0 15 17">
<rect x="6" y="1" width="8.5" height="14" fill="#78909c"/>
<g fill="#cfe3f7"><rect x="7.3" y="2.5" width="1.6" height="1.6"/><rect x="10.3" y="2.5" width="1.6" height="1.6"/><rect x="7.3" y="5.5" width="1.6" height="1.6"/><rect x="10.3" y="5.5" width="1.6" height="1.6"/><rect x="7.3" y="8.5" width="1.6" height="1.6"/><rect x="10.3" y="8.5" width="1.6" height="1.6"/></g>
<circle cx="5" cy="8.5" r="2.8" fill="#f4a460"/>
<path d="M2.2 7.5 Q5 4.5 7.8 7.5z" fill="#5d4037"/>
<path d="M0.5 16.5 Q0.5 11.8 5 11.8 Q9.5 11.8 9.5 16.5z" fill="#3f51b5"/>
</svg>
<svg style="left:220px;top:1196px" width="10" height="10" viewBox="0 0 10 10"><path d="M1.5 1.5 L8.5 8.5 M8.5 1.5 L1.5 8.5" stroke="#2e4799" stroke-width="2.2"/></svg>
<!-- messeinrichtungen icon -->
<svg style="left:248px;top:1193px" width="18" height="16" viewBox="0 0 18 16">
<rect x="0.8" y="0.8" width="16.4" height="14.4" rx="1" fill="#eceff1" stroke="#546e7a" stroke-width="1.2"/>
<rect x="2.5" y="2.5" width="13" height="3.5" fill="#66bb6a"/>
<path d="M3 8.5 H10" stroke="#e57373" stroke-width="0.8"/>
<circle cx="13" cy="8.8" r="1.5" fill="#455a64"/>
<rect x="3" y="11.5" width="12" height="2.5" fill="#fbc02d"/>
</svg>
<svg style="left:427px;top:1196px" width="10" height="10" viewBox="0 0 10 10"><path d="M1.5 1.5 L8.5 8.5 M8.5 1.5 L1.5 8.5" stroke="#2e4799" stroke-width="2.2"/></svg>
<div class="uline" style="left:243px;top:1217px;width:204px;height:4px"></div>
<svg style="left:462px;top:1193px" width="5" height="16" viewBox="0 0 5 16"><circle cx="2.5" cy="2.5" r="1.5" fill="#3f51b5"/><circle cx="2.5" cy="8" r="1.5" fill="#3f51b5"/><circle cx="2.5" cy="13.5" r="1.5" fill="#3f51b5"/></svg>
<div class="a" style="left:2217px;top:1185px;width:28px;height:38px;border-left:1px solid #ececec;border-top:1px solid #ececec"></div>

<div class="t" style="left:10.0px;top:12px;font-size:27px;color:#ffffff;transform:scaleX(0.9268);-webkit-text-stroke:0.7px #fff;">TINA</div>
<div class="t" style="left:922.6px;top:18.5px;font-size:14px;color:#ffffff;transform:scaleX(0.8385);">Suchen...</div>
<div class="t" style="left:1227.7px;top:18.5px;font-size:14px;color:#ffffff;transform:scaleX(0.8608);">Suchbereiche</div>
<div class="t" style="left:2086.3px;top:9px;font-size:13px;color:#ffffff;transform:scaleX(0.9847);">Willkommen</div>
<div class="t" style="left:2065.8px;top:25.9px;font-size:15px;color:#ffffff;transform:scaleX(0.9416);">Lisbet Grenzbach</div>
<div class="t" style="left:72.6px;top:62px;font-size:13px;color:#ffffff;transform:scaleX(0.9662);">Mein Cockpit</div>
<div class="t" style="left:237.2px;top:62px;font-size:13px;color:#1f1f1f;transform:scaleX(0.9458);">0000001, Wiederinb...</div>
<div class="t" style="left:425.6px;top:62px;font-size:13px;color:#ffffff;transform:scaleX(0.9678);">Messeinrichtungen</div>
<div class="t" style="left:614.1px;top:62px;font-size:13px;color:#ffffff;transform:scaleX(0.9383);">Maskenskript (Messe...</div>
<div class="t" style="left:54.3px;top:94.4px;font-size:14px;color:#1f1f1f;transform:scaleX(0.8636);">Verlauf:</div>
<div class="t" style="left:130.0px;top:94.4px;font-size:14px;color:#1f1f1f;transform:scaleX(0.8864);">Standardsuche für Vorgänge</div>
<div class="t" style="left:333.6px;top:94.4px;font-size:14px;color:#1f1f1f;transform:scaleX(0.8850);">0000001, Wiederinbetriebna...</div>
<div class="t" style="left:79.2px;top:129px;font-size:14px;color:#1f1f1f;transform:scaleX(0.8713);">Bearbeiten</div>
<div class="t" style="left:179.9px;top:129px;font-size:14px;color:#1f1f1f;transform:scaleX(0.8613);">Speichern</div>
<div class="t" style="left:275.5px;top:129px;font-size:14px;color:#1f1f1f;transform:scaleX(0.8761);">Speichern und schließen</div>
<div class="t" style="left:451.6px;top:129px;font-size:14px;color:#1f1f1f;transform:scaleX(0.8933);">Neuanlage</div>
<div class="t" style="left:2149.9px;top:129.9px;font-size:14px;color:#1f1f1f;transform:scaleX(1.1869);">1/1</div>
<div class="t" style="left:1959.7px;top:129.3px;font-size:13px;color:#111;font-weight:bold;transform:scaleX(0.9416);">60%</div>
<div class="t" style="left:94.9px;top:165.7px;font-size:13px;color:#1f1f1f;transform:scaleX(0.9593);">Vorgänge</div>
<div class="t" style="left:95.0px;top:183px;font-size:15px;color:#1f1f1f;transform:scaleX(0.9538);">0000001, Wiederinbetriebnahme 1ESY1170046711</div>
<div class="t" style="left:240.2px;top:240.5px;font-size:13px;color:#3c4250;transform:scaleX(0.9721);">Betreff</div>
<div class="t" style="left:378.6px;top:240.5px;font-size:13px;color:#1a1a2e;transform:scaleX(0.9520);">Wiederinbetriebnahme 1ESY1170046711</div>
<div class="t" style="left:243.0px;top:308.2px;font-size:13px;color:#1a1a2e;transform:scaleX(0.8453);">ÜBERSICHT</div>
<div class="t" style="left:252.8px;top:351.1px;font-size:13px;color:#3c4250;transform:scaleX(0.9648);">Vorgangsnummer</div>
<div class="t" style="left:391.8px;top:351.1px;font-size:13px;color:#1a1a2e;transform:scaleX(0.9148);">0000001</div>
<div class="t" style="left:252.8px;top:383.2px;font-size:13px;color:#3c4250;">Typ</div>
<div class="t" style="left:408.9px;top:383.2px;font-size:13px;color:#1a1a2e;transform:scaleX(0.9710);">Wiederinbetriebnahme</div>
<div class="t" style="left:252.8px;top:414.5px;font-size:13px;color:#3c4250;">Status</div>
<div class="t" style="left:408.9px;top:414.5px;font-size:13px;color:#1a1a2e;transform:scaleX(0.9569);">Offen</div>
<div class="t" style="left:252.8px;top:445.9px;font-size:13px;color:#3c4250;">Priorität</div>
<div class="t" style="left:408.9px;top:445.9px;font-size:13px;color:#1a1a2e;transform:scaleX(0.9761);">Normale Priorität</div>
<div class="t" style="left:255.0px;top:488px;font-size:16px;color:#1a1a2e;transform:scaleX(0.8958);">Beteiligte Personen</div>
<div class="t" style="left:255.0px;top:529px;font-size:13px;color:#3c4250;">Initiator</div>
<div class="t" style="left:417.0px;top:529px;font-size:13px;color:#1b6ec2;transform:scaleX(0.9373);">Lisbet Grenzbach</div>
<div class="t" style="left:255.0px;top:561px;font-size:13px;color:#3c4250;transform:scaleX(0.9618);">Delegiert an Gruppe</div>
<div class="t" style="left:394.0px;top:561px;font-size:13px;color:#1a1a2e;transform:scaleX(0.9506);">Plausibilisierung</div>
<div class="t" style="left:242.3px;top:634px;font-size:13px;color:#1a1a2e;transform:scaleX(0.8431);">BESCHREIBUNG</div>
<div class="t" style="left:258.0px;top:681.7px;font-size:17px;color:#111;transform:scaleX(0.9484);">Zählernummer: 1ESY1170046711</div>
<div class="t" style="left:700.3px;top:307.8px;font-size:13px;color:#1a1a2e;transform:scaleX(0.8969);">KOMMENTARE</div>
<div class="t" style="left:823.2px;top:307.8px;font-size:13px;color:#666a75;transform:scaleX(0.8716);">ANLIEGEN</div>
<div class="t" style="left:921.1px;top:307.8px;font-size:13px;color:#666a75;transform:scaleX(0.9010);">ÄNDERUNGEN</div>
<div class="t" style="left:696.0px;top:363px;font-size:11px;color:#ffffff;transform:scaleX(0.8843);">LGU</div>
<div class="t" style="left:745.7px;top:361px;font-size:14px;color:#6d6d6d;transform:scaleX(0.8734);">Kommentar schreiben...</div>
<div class="t" style="left:938.7px;top:525.2px;font-size:14px;color:#2a2a2a;font-weight:bold;transform:scaleX(0.8955);">Noch keine Kommentare</div>
<div class="t" style="left:715.0px;top:547px;font-size:12.5px;color:#222;transform:scaleX(0.9140);">Schreiben Sie einen Kommentar, um eine Diskussion zu beginnen! Erwähnen Sie einen Mitarbeiter mit </div>
<div class="t" style="left:1237.0px;top:547px;font-size:12.5px;color:#1c1c8a;transform:scaleX(0.8064);">@KÜRZEL</div>
<div class="t" style="left:1287.0px;top:547px;font-size:12.5px;color:#222;transform:scaleX(0.9050);">, um</div>
<div class="t" style="left:954.0px;top:561.8px;font-size:12.5px;color:#222;transform:scaleX(0.9222);">Ihn zu benachrichtigen</div>
<div class="t" style="left:948.0px;top:627.8px;font-size:13px;color:#5a5a5a;transform:scaleX(0.9343);">Sie können aber auch...</div>
<div class="t" style="left:870.0px;top:739.7px;font-size:13px;color:#ffffff;transform:scaleX(0.9760);">Aktivität erstellen</div>
<div class="t" style="left:1058.0px;top:739.7px;font-size:13px;color:#ffffff;transform:scaleX(0.9480);">E-Mail versenden</div>
<div class="t" style="left:1379.6px;top:308px;font-size:13px;color:#1a1a2e;transform:scaleX(0.8429);">STATUS</div>
<div class="t" style="left:1420.2px;top:348.2px;font-size:14px;color:#ffffff;font-weight:bold;transform:scaleX(0.8891);">Offen</div>
<div class="t" style="left:1557.4px;top:348.2px;font-size:14px;color:#1a1a2e;font-weight:bold;transform:scaleX(0.8853);">Laufend</div>
<div class="t" style="left:1701.3px;top:348.2px;font-size:14px;color:#1a1a2e;font-weight:bold;transform:scaleX(0.9107);">Beendet</div>
<div class="t" style="left:1380.0px;top:405.8px;font-size:13px;color:#1a1a2e;transform:scaleX(0.8362);">DETAILS</div>
<div class="t" style="left:1389.2px;top:450.1px;font-size:13px;color:#3c4250;transform:scaleX(0.9561);">Fälligkeitsdatum</div>
<div class="t" style="left:1528.2px;top:450.1px;font-size:13px;color:#1a1a2e;transform:scaleX(0.9375);">12.11.2025 um 09:26</div>
<div class="t" style="left:1389.2px;top:481.1px;font-size:13px;color:#3c4250;transform:scaleX(0.9621);">Erinnerungsdatum</div>
<div class="t" style="left:1528.2px;top:481.1px;font-size:13px;color:#1a1a2e;transform:scaleX(0.9375);">07.11.2025 um 09:26</div>
<div class="t" style="left:2009.2px;top:236.7px;font-size:16px;color:#1a1a2e;transform:scaleX(0.9331);">Aktionen</div>
<div class="t" style="left:2048.2px;top:289.7px;font-size:13px;color:#1a1a2e;transform:scaleX(0.9617);">Vorgangsmanagement</div>
<div class="t" style="left:2057.6px;top:327.7px;font-size:13px;color:#1a1a2e;transform:scaleX(0.9464);">Vorgang abschließen</div>
<div class="t" style="left:2057.6px;top:361.7px;font-size:13px;color:#1a1a2e;transform:scaleX(0.9752);">Anliegen hinzufügen</div>
<div class="t" style="left:2057.6px;top:394.9px;font-size:13px;color:#aeb0b8;transform:scaleX(0.9774);">Vorgang wiedereröffnen</div>
<div class="t" style="left:2048.2px;top:432.9px;font-size:13px;color:#1a1a2e;transform:scaleX(0.9670);">Compliance-Prüfung</div>
<div class="t" style="left:2048.2px;top:466.3px;font-size:13px;color:#1a1a2e;transform:scaleX(0.9643);">Dienstbarkeiten</div>
<div class="t" style="left:74.8px;top:1195.2px;font-size:13px;color:#7a7a7a;transform:scaleX(0.8425);">GESCHÄFTSPARTNER (0)</div>
<div class="t" style="left:272.2px;top:1195.2px;font-size:13px;color:#1a1a2e;transform:scaleX(0.8805);">MESSEINRICHTUNGEN (1)</div>
<div class="t" style="left:479.6px;top:1195.2px;font-size:13px;color:#7a7a7a;transform:scaleX(0.8175);">WEITERE BEREICHE</div>
</body></html>
